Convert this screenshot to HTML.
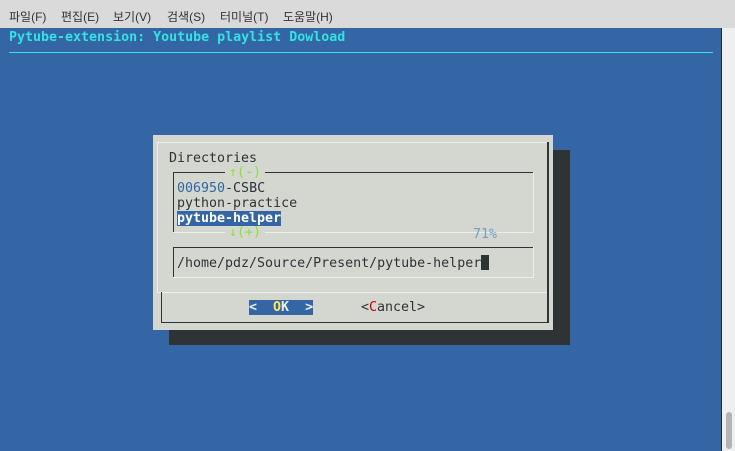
<!DOCTYPE html>
<html><head><meta charset="utf-8"><style>
*{margin:0;padding:0;box-sizing:border-box}
body{width:735px;height:451px;overflow:hidden;background:#dadada;position:relative;font-family:"DejaVu Sans Mono","Liberation Mono",monospace;font-size:13.3px}
.a{position:absolute}
.menu{position:absolute;top:0;left:0;width:735px;height:28px;background:#dadada;font-family:"Liberation Sans","Noto Sans CJK KR",sans-serif;font-size:12px;color:#333}
.menu span{position:absolute;top:8px}
.term{position:absolute;left:0;top:28px;width:722px;height:423px;background:#3465a4;border-right:1px solid #2a2a2a}
.sb{position:absolute;left:722px;top:28px;width:13px;height:423px;background:#efefef}
.t{position:absolute;white-space:pre;line-height:15px}
</style></head><body>
<div class="menu">
<span style="left:9px">파일(F)</span><span style="left:61px">편집(E)</span><span style="left:113px">보기(V)</span><span style="left:167px">검색(S)</span><span style="left:220px">터미널(T)</span><span style="left:283px">도움말(H)</span>
</div>
<div class="term"></div>
<div class="sb"><div class="a" style="left:4px;top:384px;width:6px;height:37px;background:#b3b3b3;border-radius:3px"></div></div>
<div class="t" style="left:9px;top:30px;color:#34e2e2;font-weight:bold">Pytube-extension: Youtube playlist Dowload</div>
<div class="a" style="left:9px;top:52px;width:704px;height:1px;background:#34e2e2"></div>
<div class="a" style="left:169px;top:150px;width:401px;height:195px;background:#2e3436"></div>
<div class="a" style="left:153px;top:135px;width:400px;height:195px;background:#d3d7cf"></div>
<div class="a" style="left:157px;top:142px;width:390px;height:1px;background:#eeeeec"></div>
<div class="a" style="left:157px;top:142px;width:1px;height:151px;background:#eeeeec"></div>
<div class="a" style="left:547px;top:142px;width:2px;height:152px;background:#2e3436"></div>
<div class="a" style="left:157px;top:292px;width:390px;height:1px;background:#eeeeec"></div>
<div class="a" style="left:547px;top:292px;width:2px;height:31px;background:#2e3436"></div>
<div class="a" style="left:161px;top:322px;width:388px;height:1px;background:#2e3436"></div>
<div class="a" style="left:161px;top:292px;width:1px;height:31px;background:#2e3436"></div>
<div class="t" style="left:169px;top:151px;color:#2e3436">Directories</div>
<div class="a" style="left:173px;top:172px;width:361px;height:1px;background:#2e3436"></div>
<div class="a" style="left:173px;top:172px;width:1px;height:61px;background:#2e3436"></div>
<div class="a" style="left:533px;top:172px;width:1px;height:61px;background:#eeeeec"></div>
<div class="a" style="left:173px;top:232px;width:361px;height:1px;background:#eeeeec"></div>
<div class="t" style="left:225px;top:165px;background:#d3d7cf;color:#8ae234;padding:0 4px">↑(-)</div>
<div class="t" style="left:225px;top:225px;background:#d3d7cf;color:#8ae234;padding:0 4px">↓(+)</div>
<div class="t" style="left:473px;top:227px;color:#729fcf">71%</div>
<div class="t" style="left:177px;top:181px;color:#2e3436"><span style="color:#3465a4">006950</span>-CSBC</div>
<div class="t" style="left:177px;top:196px;color:#2e3436">python-practice</div>
<div class="t" style="left:177px;top:211px;color:#fff;background:#3465a4;font-weight:bold">pytube-helper</div>
<div class="a" style="left:173px;top:247px;width:361px;height:1px;background:#2e3436"></div>
<div class="a" style="left:173px;top:247px;width:1px;height:31px;background:#2e3436"></div>
<div class="a" style="left:533px;top:247px;width:1px;height:31px;background:#eeeeec"></div>
<div class="a" style="left:173px;top:277px;width:361px;height:1px;background:#eeeeec"></div>
<div class="t" style="left:177px;top:256px;color:#2e3436">/home/pdz/Source/Present/pytube-helper</div>
<div class="a" style="left:481px;top:255px;width:8px;height:15px;background:#2e3436"></div>
<div class="t" style="left:249px;top:300px;width:64px;background:#3465a4;color:#eeeeec;font-weight:bold">&lt;  <span style="color:#fce94f">O</span>K  &gt;</div>
<div class="t" style="left:361px;top:300px;color:#2e3436">&lt;<span style="color:#cc0000">C</span>ancel&gt;</div>
</body></html>
